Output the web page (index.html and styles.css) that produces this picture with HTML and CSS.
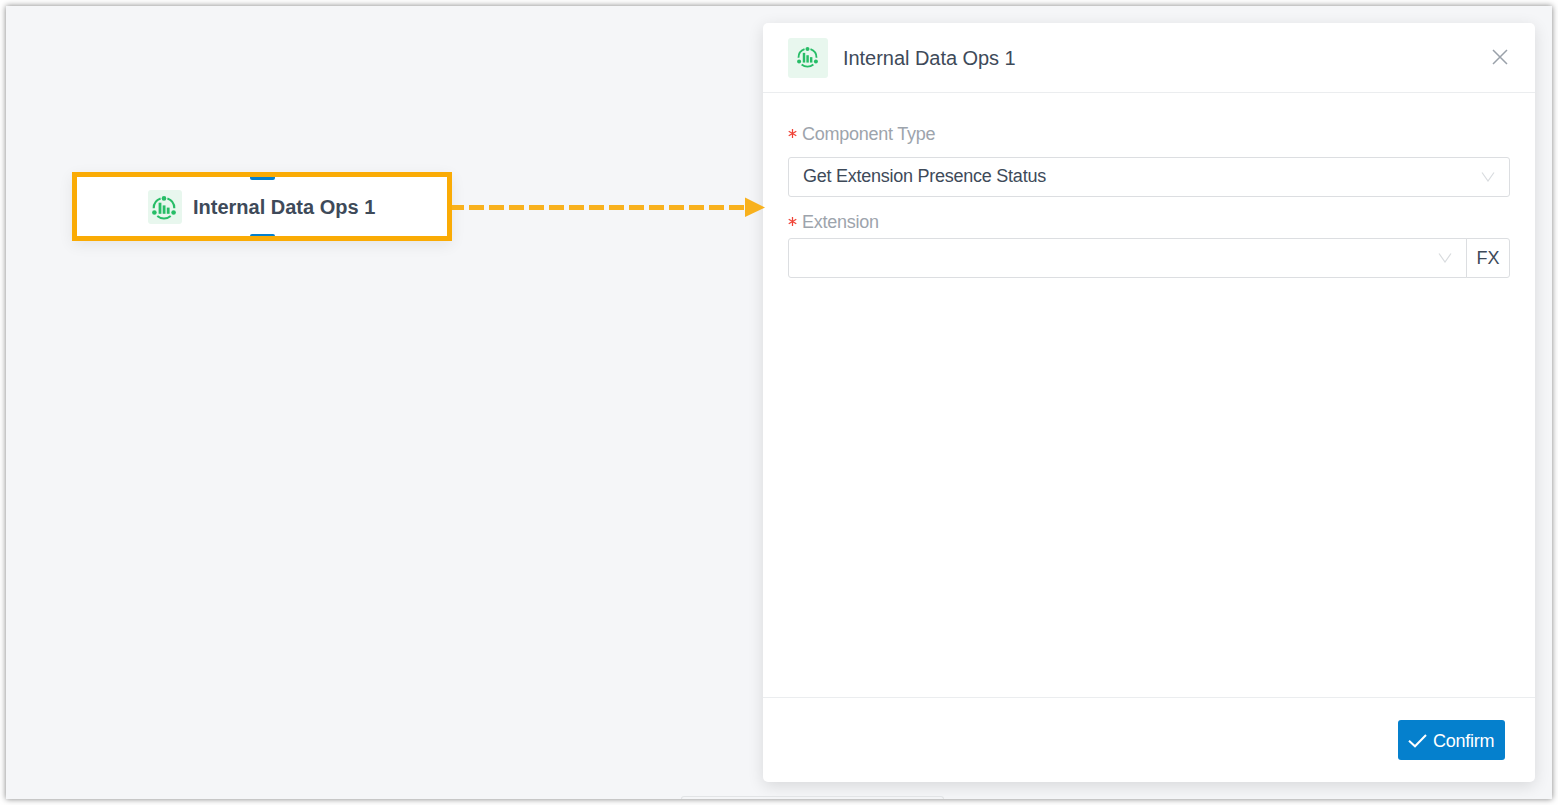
FILE: index.html
```html
<!DOCTYPE html>
<html lang="en">
<head>
    <meta charset="UTF-8">
    <meta name="viewport" content="width=device-width, initial-scale=1.0">
    <title>Internal Data Ops 1</title>
    <link rel="stylesheet" href="styles.css">
</head>
<body>

    <!-- Shared component icon -->
    <svg class="icon-defs" width="0" height="0">
        <symbol id="dataOps" viewBox="4.4 6.2 24 24">
            <g fill="none" stroke="#27bd67" stroke-width="2.1">
                <path d="M13 8.7A10.3 10.3 0 0 0 6.1 18.4"/>
                <path d="M19.8 8.7A10.3 10.3 0 0 1 26.7 18.4"/>
                <path d="M9.7 26.2A10.3 10.3 0 0 0 23.1 26.2"/>
            </g>
            <g fill="#27bd67">
                <circle cx="16.4" cy="8.6" r="2.3"/>
                <circle cx="6.8" cy="22.7" r="2.3"/>
                <circle cx="26" cy="22.7" r="2.3"/>
                <rect x="11" y="12.9" width="2.8" height="11.1"/>
                <rect x="15.1" y="15.6" width="2.8" height="8.4"/>
                <rect x="19.2" y="17.8" width="2.8" height="6.2"/>
            </g>
        </symbol>
    </svg>

    <div class="canvas">
        <!-- Flow node -->
        <div class="node">
            <span class="port port-top"></span>
            <span class="node-icon"><svg><use href="#dataOps"/></svg></span>
            <span class="node-title">Internal Data Ops 1</span>
            <span class="port port-bottom"></span>
        </div>

        <div class="toolbar"></div>

        <!-- Settings panel -->
        <div class="panel">
            <div class="panel-header">
                <span class="panel-icon"><svg><use href="#dataOps"/></svg></span>
                <h1>Internal Data Ops 1</h1>
                <svg class="close" viewBox="0 0 16 16"><path d="M1 1L15 15M15 1L1 15"/></svg>
            </div>

            <div class="panel-body">
                <div class="label"><svg class="required" viewBox="0 0 10 10"><path d="M5 0V10M.8 2.5L9.2 7.5M9.2 2.5L.8 7.5"/></svg>Component Type</div>
                <div class="select">
                    <span class="value">Get Extension Presence Status</span>
                    <svg class="arrow" viewBox="0 0 14 10"><path d="M1 .5L7 9L13 .5"/></svg>
                </div>

                <div class="label label-extension"><svg class="required" viewBox="0 0 10 10"><path d="M5 0V10M.8 2.5L9.2 7.5M9.2 2.5L.8 7.5"/></svg>Extension</div>
                <div class="select-group">
                    <div class="select">
                        <svg class="arrow" viewBox="0 0 14 10"><path d="M1 .5L7 9L13 .5"/></svg>
                    </div>
                    <div class="fx">FX</div>
                </div>
            </div>

            <div class="panel-footer">
                <button type="button" class="confirm">
                    <svg viewBox="0 0 19 14"><path d="M1 6.8L7 12.3L18 1"/></svg>
                    <span>Confirm</span>
                </button>
            </div>
        </div>

        <!-- Arrow from the node to the panel -->
        <svg class="connector" viewBox="0 0 314 20">
            <path d="M0 10.5H294" stroke="#f8b11d" stroke-width="5" stroke-dasharray="15 5" stroke-dashoffset="3"/>
            <path d="M293 0.5L313 10.5L293 20Z" fill="#f8b11d"/>
        </svg>
    </div>

</body>
</html>
```
FILE: styles.css
```css
* {
    box-sizing: border-box;
}

body {
    margin: 0;
    padding: 6px;
    height: 805px;
    overflow: hidden;
    background: #fff;
    font-family: "Liberation Sans", Arial, sans-serif;
    color: #3e4a59;
}

svg {
    display: block;
}

.icon-defs {
    position: absolute;
}

.canvas {
    position: relative;
    width: 1546px;
    height: 793px;
    padding: 17px 17px 0 0;
    background: #f5f6f8;
    box-shadow: 0 0 6px rgba(0, 0, 0, 0.5);
}

/* Flow node */
.node {
    position: absolute;
    left: 66px;
    top: 166px;
    width: 380px;
    height: 69px;
    display: flex;
    align-items: center;
    padding-left: 71px;
    background: #fff;
    border: 5px solid #faab05;
    box-shadow: 0 4px 14px rgba(0, 0, 0, 0.07);
}

.node-icon,
.panel-icon {
    display: flex;
    align-items: center;
    justify-content: center;
    flex: none;
    background: #e8f7ee;
    border-radius: 3px;
}

.node-icon {
    width: 34px;
    height: 34px;
    padding: 2px 2px 0 0;
}

.node-icon svg {
    width: 24px;
    height: 24px;
}

.node-title {
    margin-left: 11px;
    padding-top: 2px;
    font-size: 20px;
    font-weight: bold;
    white-space: nowrap;
}

.port {
    position: absolute;
    left: 173px;
    width: 25px;
    height: 3px;
    background: #0580cd;
}

.port-top {
    top: 0;
    border-radius: 0 0 2px 2px;
}

.port-bottom {
    bottom: 0;
    height: 2px;
    border-radius: 2px 2px 0 0;
}

.connector {
    position: absolute;
    left: 446px;
    top: 191px;
    width: 314px;
    height: 20px;
}

/* Bottom toolbar, mostly outside of the canvas */
.toolbar {
    position: absolute;
    left: 675px;
    bottom: 0;
    width: 263px;
    height: 3px;
    border: 1px solid #e2e4e6;
    border-bottom: none;
    border-radius: 3px 3px 0 0;
}

/* Settings panel */
.panel {
    display: flex;
    flex-direction: column;
    width: 772px;
    height: 759px;
    margin-left: auto;
    background: #fff;
    border-radius: 5px;
    box-shadow: 0 4px 16px rgba(0, 0, 0, 0.12);
}

.panel-header {
    display: flex;
    align-items: center;
    height: 70px;
    padding: 0 27px 0 25px;
    border-bottom: 1px solid #ebedef;
}

.panel-icon {
    width: 40px;
    height: 40px;
    padding-right: 2px;
}

.panel-icon svg {
    width: 21px;
    height: 21px;
}

.panel-header h1 {
    margin: 0 auto 0 15px;
    padding-top: 2px;
    font-size: 20px;
    font-weight: normal;
    letter-spacing: -0.04px;
}

.close {
    width: 16px;
    height: 16px;
    margin-bottom: 2px;
    fill: none;
    stroke: #9aa1aa;
    stroke-width: 1.5;
}

.panel-body {
    flex: 1;
    padding: 31px 25px 0;
}

.label {
    display: flex;
    align-items: center;
    height: 20px;
    margin-bottom: 13px;
    font-size: 18px;
    letter-spacing: -0.25px;
    color: #9da4ac;
}

.label-extension {
    margin: 15px 0 6px;
}

.required {
    width: 9px;
    height: 9px;
    margin-right: 5px;
    margin-bottom: 1px;
    fill: none;
    stroke: #f04438;
    stroke-width: 1.4;
}

.select {
    display: flex;
    align-items: center;
    flex: 1;
    height: 40px;
    padding: 0 14px;
    border: 1px solid #dcdee1;
    border-radius: 3px;
    font-size: 18px;
    letter-spacing: -0.25px;
}

.value {
    padding-bottom: 2px;
}

.arrow {
    width: 14px;
    height: 10px;
    margin-left: auto;
    fill: none;
    stroke: #d9dcdf;
    stroke-width: 1.2;
}

.select-group {
    display: flex;
}

.select-group .select {
    border-radius: 3px 0 0 3px;
}

.fx {
    width: 44px;
    height: 40px;
    margin-left: -1px;
    border: 1px solid #dcdee1;
    border-radius: 0 3px 3px 0;
    font-size: 18px;
    line-height: 38px;
    text-align: center;
}

.panel-footer {
    display: flex;
    align-items: center;
    justify-content: flex-end;
    height: 85px;
    padding-right: 30px;
    border-top: 1px solid #ebedef;
}

.confirm {
    display: flex;
    align-items: center;
    width: 107px;
    height: 40px;
    padding: 2px 0 0 10px;
    background: #0580cd;
    border: none;
    border-radius: 3px;
    font-family: inherit;
    font-size: 18px;
    letter-spacing: -0.25px;
    color: #fff;
    cursor: pointer;
}

.confirm svg {
    width: 19px;
    height: 14px;
    margin-right: 6px;
    fill: none;
    stroke: #fff;
    stroke-width: 2;
}
```
